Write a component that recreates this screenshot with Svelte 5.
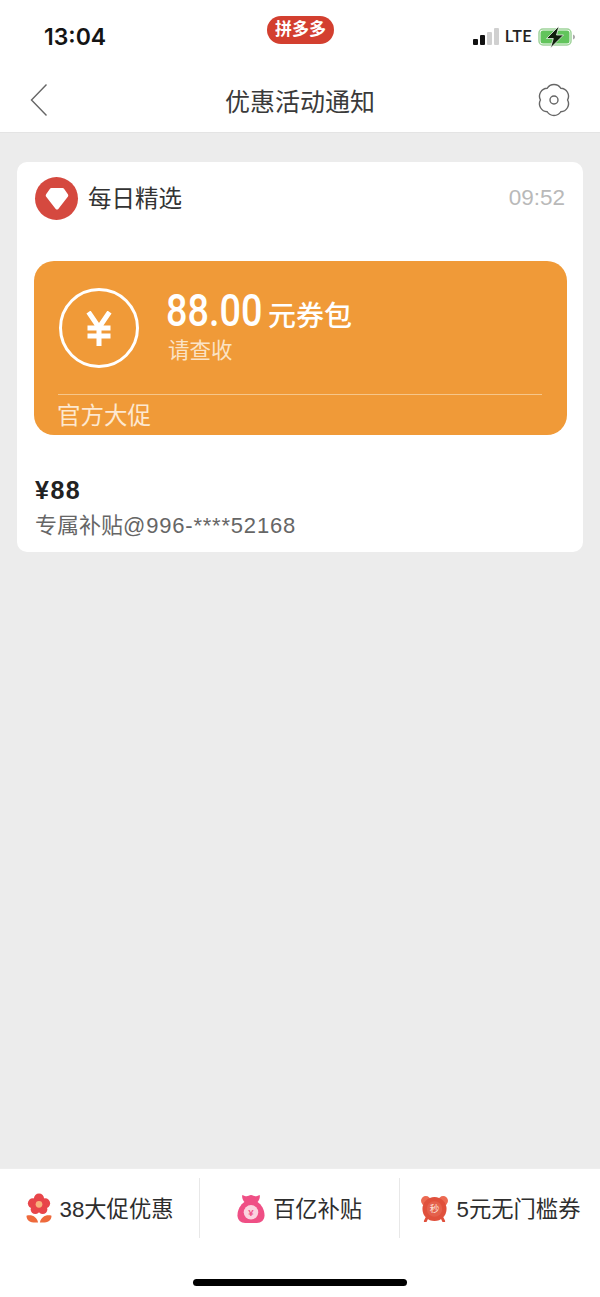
<script lang="ts">
  const tabs = [
    { id: 'flower', label: '38大促优惠' },
    { id: 'bag', label: '百亿补贴' },
    { id: 'clock', label: '5元无门槛券' }
  ];
</script>

<div class="page">
  <header class="top">
    <div class="status">
      <span class="time">13:04</span>
      <span class="app-pill">拼多多</span>
      <div class="indicators">
        <span class="signal" aria-hidden="true">
          <i class="on s1"></i><i class="on s2"></i><i class="s3"></i><i class="s4"></i>
        </span>
        <span class="lte">LTE</span>
        <svg class="battery" width="38" height="22" viewBox="0 0 38 22" aria-hidden="true">
          <rect x="1" y="3" width="32" height="16" rx="4" fill="#fff" stroke="#9fd39a" stroke-width="1.5" />
          <rect x="2.500" y="4.500" width="29" height="13" rx="2.500" fill="#62c45c" />
          <path d="M35 8.500c1.400.4 2 1.300 2 2.500s-.6 2.100-2 2.500z" fill="#aaa" />
          <path d="M21 0 8.500 12.500h6.800L12.500 22 25.500 9h-7z" fill="#10200c" stroke="#fff" stroke-width=".7" />
        </svg>
      </div>
    </div>
    <nav class="nav">
      <svg class="back" width="20" height="34" viewBox="0 0 20 34" aria-hidden="true">
        <path d="M17.500 1.500 2.500 17l15 15.500" fill="none" stroke="#666" stroke-width="1.400" />
      </svg>
      <h1>优惠活动通知</h1>
      <svg class="gear" width="34" height="34" viewBox="0 0 34 34" aria-hidden="true">
        <path d="M10.210 5.250A8 8 0 0 1 23.790 5.250A8 8 0 0 1 30.570 17A8 8 0 0 1 23.790 28.750A8 8 0 0 1 10.210 28.750A8 8 0 0 1 3.430 17A8 8 0 0 1 10.210 5.250z" fill="none" stroke="#666" stroke-width="1.400" />
        <circle cx="17" cy="17" r="4" fill="none" stroke="#666" stroke-width="1.400" />
      </svg>
    </nav>
  </header>

  <main class="content">
    <section class="card">
      <div class="card-head">
        <span class="avatar">
          <svg width="24" height="24" viewBox="0 0 28 24" preserveAspectRatio="none" aria-hidden="true">
            <path d="M7.500 1h13c.8 0 1.400.3 1.900.9l4.300 5.300c.6.800.6 1.800-.1 2.500L15.500 21.900c-.8.900-2.200.9-3 0L1.400 9.700c-.7-.7-.7-1.700-.1-2.500l4.300-5.300C6.100 1.300 6.700 1 7.500 1z" fill="#fff" />
          </svg>
        </span>
        <span class="source">每日精选</span>
        <span class="stamp">09:52</span>
      </div>

      <div class="coupon">
        <div class="coupon-main">
          <span class="yen-ring">
            <svg width="26" height="35" viewBox="0 0 26 35" aria-hidden="true">
              <path d="M2.500 1 13 16.500 23.500 1M1.500 17h23M1.500 25h23M13 15v20" fill="none" stroke="#fff" stroke-width="5" />
            </svg>
          </span>
          <div class="amount">
            <div class="amount-line"><span class="num">88.00</span><span class="unit">元券包</span></div>
            <div class="hint">请查收</div>
          </div>
        </div>
        <div class="coupon-foot">官方大促</div>
      </div>

      <div class="price">¥88</div>
      <div class="note">专属补贴<span class="note-id">@996-****52168</span></div>
    </section>
  </main>

  <footer class="bottom">
    <div class="tabs">
      {#each tabs as t (t.id)}
        <div class="tab">
          {#if t.id === 'flower'}
            <svg width="26" height="30" viewBox="0 0 28 32" aria-hidden="true">
              <g fill="#e8454a">
                <circle cx="14" cy="6" r="5.500" /><circle cx="20.500" cy="11" r="5.500" /><circle cx="18" cy="17.500" r="5" />
                <circle cx="10" cy="17.500" r="5" /><circle cx="7.500" cy="11" r="5.500" /><circle cx="14" cy="12" r="6" />
              </g>
              <circle cx="14" cy="12" r="3.600" fill="#f8b27c" />
              <path d="M13 31.500C6 32.500.5 30 .5 24.300 6 22.500 12 25.500 13 31.500zM15 31.500c7 1 12.500-1.500 12.500-7.200C22 22.500 16 25.500 15 31.500z" fill="#ee6a3c" />
            </svg>
          {:else if t.id === 'bag'}
            <svg width="28" height="29" viewBox="0 0 28 30" aria-hidden="true">
              <path d="M5 1c3 1.200 4.500 1.800 6.500.8 1.800-.9 3.200-.9 5 0 2 1 3.500.4 6.500-.8.600 2.500-.4 5.500-2.500 7.500h-13C5.400 6.500 4.400 3.500 5 1z" fill="#ef4f85" />
              <path d="M7.500 8h13C25 11 28 16.500 28 22c0 5-3.500 8-8 8H8c-4.500 0-8-3-8-8C0 16.500 3 11 7.500 8z" fill="#ef4f85" />
              <circle cx="14" cy="19" r="7.500" fill="#fbd3df" />
              <text x="14" y="23" class="bag-yen">¥</text>
            </svg>
          {:else}
            <svg width="29" height="27" viewBox="0 0 30 28" aria-hidden="true">
              <circle cx="6" cy="6" r="5" fill="#ec6a52" /><circle cx="24" cy="6" r="5" fill="#ec6a52" />
              <path d="M7 24l-1.500 3M23 24l1.500 3" stroke="#e0503c" stroke-width="3" stroke-linecap="round" />
              <circle cx="15" cy="14.500" r="12.500" fill="#e0503c" />
              <circle cx="15" cy="14.500" r="8" fill="#e4604c" />
              <text x="15" y="18" class="clock-sec">秒</text>
            </svg>
          {/if}
          <span>{t.label}</span>
        </div>
      {/each}
    </div>
    <div class="home-bar"></div>
  </footer>
</div>

<style>
  :global(body) { margin: 0; background: #ececec; }
  .page {
    width: 600px; height: 1297px; display: flex; flex-direction: column;
    font-family: "Liberation Sans", "Noto Sans CJK SC", sans-serif;
    color: #2a2a2a; background: #ececec; overflow: hidden;
  }
  .top { background: #fff; border-bottom: 1.500px solid #e4e4e4; height: 133px; box-sizing: border-box; flex: none; }
  .status { height: 68px; padding: 0 24px 0 44px; display: flex; align-items: center; position: relative; }
  .time { font-size: 23px; color: #141414; font-family: Inter, "Liberation Sans", sans-serif; font-weight: 600; margin-top: 5px; }
  .app-pill {
    position: absolute; left: 267px; top: 16px; width: 67px; height: 28px; border-radius: 14px;
    background: #d33f2f; color: #fff; font-size: 17px; font-weight: 700; line-height: 28px; text-align: center;
  }
  .indicators { margin-left: auto; display: flex; align-items: center; margin-top: 5px; }
  .signal { display: flex; align-items: flex-end; gap: 1.500px; height: 17px; margin-right: 6px; }
  .signal i { width: 5.500px; background: #d0d0d0; border-radius: 1px; }
  .signal .on { background: #111; }
  .s1 { height: 6px; } .s2 { height: 10px; } .s3 { height: 13px; } .s4 { height: 17px; }
  .lte { font-size: 16px; font-weight: 500; font-family: Roboto, "Liberation Sans", sans-serif; letter-spacing: .5px; color: #222; margin-right: 6px; }
  .nav { height: 64px; padding: 0 29px; display: flex; align-items: center; justify-content: space-between; position: relative; }
  .nav h1 {
    margin: 0; font-size: 25px; font-weight: 400; color: #3a3a3a; position: absolute;
    left: 0; right: 0; text-align: center; pointer-events: none;
  }

  .content { flex: 1; padding: 29px 17px 0; }
  .card { background: #fff; border-radius: 10px; height: 390px; padding: 15px 16px 0 18px; box-sizing: border-box; }
  .card-head { display: flex; align-items: center; }
  .avatar {
    width: 43px; height: 43px; border-radius: 50%; background: #d5493f;
    display: flex; align-items: center; justify-content: center; flex: none;
  }
  .source { font-size: 23.500px; color: #333; margin: 0 0 4px 10px; }
  .stamp { margin: 0 2px 2px auto; font-size: 22.500px; color: #b9b9b9; }

  .coupon {
    margin: 41px 0 0 -1px; height: 174px; border-radius: 20px; background: #f09a38; color: #fff;
    padding: 0 25px 0 24px; box-sizing: border-box; display: flex; flex-direction: column;
  }
  .coupon-main { height: 133px; border-bottom: 1px solid #f6c68a; display: flex; align-items: flex-start; flex: none; }
  .yen-ring {
    width: 80px; height: 80px; margin: 27px 0 0 1px; box-sizing: border-box; border: 3.500px solid #fff; border-radius: 50%;
    display: flex; align-items: center; justify-content: center; flex: none;
  }
  .amount { margin-left: 27px; }
  .amount-line { display: flex; align-items: baseline; margin-top: 25px; height: 50px; }
  .num {
    display: inline-block; width: 96px; font-size: 45px; line-height: 50px; font-weight: 500; white-space: nowrap;
    font-family: Roboto, "Liberation Sans", sans-serif; transform: scaleX(.84); transform-origin: 0 50%;
  }
  .unit { font-size: 28px; margin-left: 6px; font-weight: 500; }
  .hint { font-size: 21.500px; line-height: 26px; margin: 2px 0 0 2px; color: #fbe3c6; }
  .coupon-foot { font-size: 23.500px; line-height: 42px; color: #fde8d0; margin-left: -1px; }

  .price { margin-top: 39px; font-size: 25px; font-weight: 700; letter-spacing: 1.500px; color: #222; line-height: 32px; }
  .note { margin-top: 6px; font-size: 22px; line-height: 28px; color: #666; }
  .note-id { letter-spacing: .8px; }

  .bottom { background: #fff; height: 129px; flex: none; position: relative; border-top: 1px solid #eee; box-sizing: border-box; }
  .tabs { display: flex; padding-top: 9px; }
  .tab {
    width: 200px; height: 60px; display: flex; align-items: center; justify-content: center; gap: 8px;
    font-size: 22.300px; color: #2e2e2e; border-right: 1px solid #e8e8e8; box-sizing: border-box;
  }
  .tab:last-child { border-right: 0; }
  .tab span { margin-bottom: 3px; }
  .bag-yen { font-size: 10px; font-weight: 700; fill: #ef4f85; text-anchor: middle; }
  .clock-sec { font-size: 10px; fill: #fde0d8; text-anchor: middle; }
  .home-bar {
    position: absolute; left: 193px; top: 110px; width: 214px; height: 7px; border-radius: 4px; background: #000;
  }
</style>
